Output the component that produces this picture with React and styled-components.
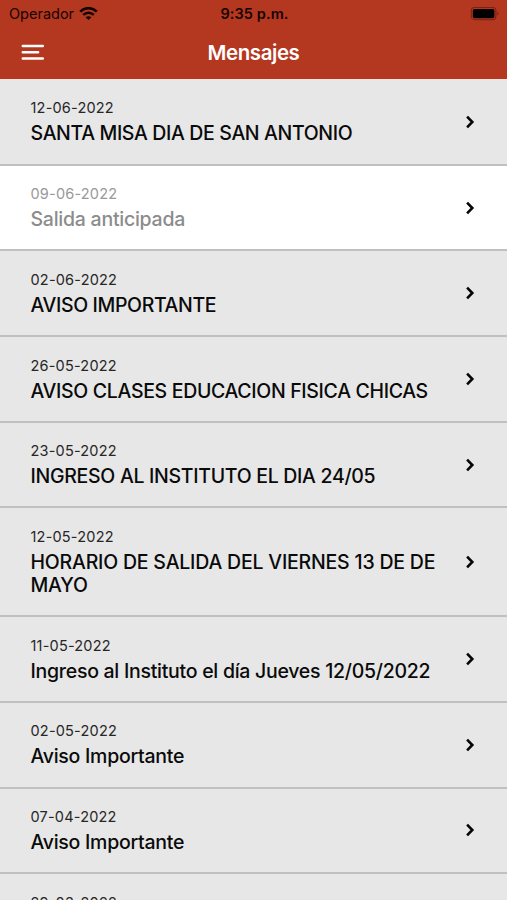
import styled, { createGlobalStyle } from "styled-components";

const messages = [
  { date: "12-06-2022", title: "SANTA MISA DIA DE SAN ANTONIO", tracking: -0.36 },
  { date: "09-06-2022", title: "Salida anticipada", read: true, tracking: -0.25 },
  { date: "02-06-2022", title: "AVISO IMPORTANTE", tracking: -0.37 },
  { date: "26-05-2022", title: "AVISO CLASES EDUCACION FISICA CHICAS", tracking: -0.33 },
  { date: "23-05-2022", title: "INGRESO AL INSTITUTO EL DIA 24/05", tracking: -0.3 },
  { date: "12-05-2022", title: "HORARIO DE SALIDA DEL VIERNES 13 DE DE MAYO", tracking: -0.2 },
  { date: "11-05-2022", title: "Ingreso al Instituto el día Jueves 12/05/2022", tracking: -0.27 },
  { date: "02-05-2022", title: "Aviso Importante", tracking: -0.26 },
  { date: "07-04-2022", title: "Aviso Importante", tracking: -0.26 },
  { date: "29-03-2022", title: "Aviso Importante", tracking: -0.26 },
];

export default function App() {
  return (
    <>
      <GlobalStyle />
      <SCREEN>
        <HEADER>
          <STATUS>
            <CARRIER>
              Operador
              <WifiIcon />
            </CARRIER>
            <TIME>9:35 p.m.</TIME>
            <BatteryIcon />
          </STATUS>
          <NAVBAR>
            <MENU aria-label="Menú">
              <MenuIcon />
            </MENU>
            <H1>Mensajes</H1>
          </NAVBAR>
        </HEADER>
        <LIST>
          {messages.map((message) => (
            <ROW key={message.date} $read={message.read}>
              <TEXT>
                <DATE $read={message.read}>{message.date}</DATE>
                <TITLE $read={message.read} $tracking={message.tracking}>
                  {message.title}
                </TITLE>
              </TEXT>
              <ChevronIcon />
            </ROW>
          ))}
        </LIST>
      </SCREEN>
    </>
  );
}

function WifiIcon() {
  return (
    <svg width="19" height="14" viewBox="0 0 19 14" fill="none" stroke="#160402">
      <path d="M1.2 4.6C5.8 0 13.2 0 17.8 4.6" strokeWidth="2.6" />
      <path d="M4.2 7.9C7.2 5 11.8 5 14.8 7.9" strokeWidth="2.5" />
      <path d="M9.5 13L6.6 10.3C8.2 8.9 10.8 8.9 12.4 10.3Z" fill="#160402" stroke="none" />
    </svg>
  );
}

function BatteryIcon() {
  return (
    <svg width="30" height="14" viewBox="0 0 30 14">
      <rect x="1.3" y="0.5" width="24.6" height="12.2" rx="3.4" fill="none" stroke="#7c2115" strokeWidth="1.1" />
      <rect x="2.8" y="2" width="21.6" height="9.2" rx="1.8" fill="#000" />
      <path d="M27.4 4.6v4c1.6-.6 1.6-3.4 0-4z" fill="#7c2115" />
    </svg>
  );
}

function MenuIcon() {
  return (
    <svg width="24" height="18" viewBox="0 0 24 18" stroke="#fff" strokeWidth="2.5" strokeLinecap="round">
      <path d="M1.8 3H21.8M1.8 9.2H17.1M1.8 15.4H21.8" />
    </svg>
  );
}

function ChevronIcon() {
  return (
    <svg width="10" height="14" viewBox="0 0 10 14" fill="none" stroke="#050505" strokeWidth="2.6">
      <path d="M2.1 1.6L7.3 7L2.1 12.4" />
    </svg>
  );
}

const GlobalStyle = createGlobalStyle`
  * {
    box-sizing: border-box;
  }
  body {
    margin: 0;
    background: #e7e7e7;
    font-family: Inter, "Liberation Sans", sans-serif;
  }
`;

const SCREEN = styled.div`
  height: 900px;
  display: flex;
  flex-direction: column;
  overflow: hidden;
`;

const HEADER = styled.header`
  flex: none;
  height: 79px;
  background: #b43720;
`;

const STATUS = styled.div`
  height: 27px;
  display: grid;
  grid-template-columns: 1fr auto 1fr;
  align-items: center;
  padding: 0 7px 0 9px;
  color: #160402;
  font-size: 14.5px;

  > svg {
    justify-self: end;
  }
`;

const CARRIER = styled.span`
  display: flex;
  align-items: center;
  gap: 5px;
`;

const TIME = styled.span`
  font-weight: 600;
  letter-spacing: 0.1px;
`;

const NAVBAR = styled.nav`
  height: 50px;
  display: grid;
  grid-template-columns: 1fr auto 1fr;
  align-items: center;
  padding: 0 21px;
`;

const MENU = styled.button`
  justify-self: start;
  display: flex;
  padding: 0;
  border: 0;
  background: none;
`;

const H1 = styled.h1`
  margin: 0;
  color: #fff;
  font-size: 20.5px;
  font-weight: 600;
  letter-spacing: -0.45px;
`;

const LIST = styled.ul`
  margin: 0;
  padding: 0;
  border-top: 1px solid #f7e3df;
  list-style: none;
`;

const ROW = styled.li`
  display: flex;
  align-items: center;
  justify-content: space-between;
  padding: 18.45px 32px 18.25px 30.5px;
  border-bottom: 2px solid #c0c0c0;
  background: ${({ $read }) => ($read ? "#fff" : "#e7e7e7")};
`;

const TEXT = styled.div`
  width: 415px;
`;

const DATE = styled.div`
  color: ${({ $read }) => ($read ? "#999" : "#262626")};
  font-size: 14.5px;
  letter-spacing: 0.2px;
  line-height: 20px;
`;

const TITLE = styled.div`
  margin-top: 4px;
  color: ${({ $read }) => ($read ? "#8c8c8c" : "#0a0a0a")};
  font-size: 19.5px;
  font-weight: 500;
  letter-spacing: ${({ $tracking }) => $tracking}px;
  line-height: 23px;
`;
